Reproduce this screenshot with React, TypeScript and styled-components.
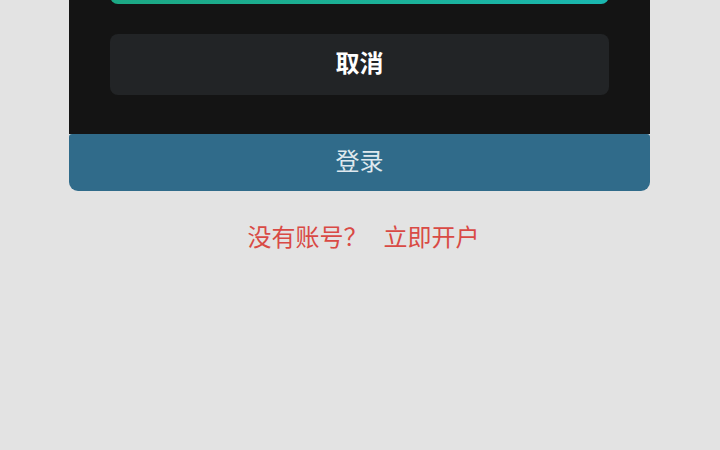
import React from 'react'
import styled, { createGlobalStyle } from 'styled-components'

const GlobalStyle = createGlobalStyle`
  html, body {
    margin: 0;
    padding: 0;
    background: #e3e3e3;
    font-family: "Noto Sans CJK SC", "Noto Sans", sans-serif;
  }
`

const Page = styled.div`
  display: flex;
  flex-direction: column;
  align-items: center;
  height: 450px;
  overflow: hidden;
`

const Card = styled.div`
  width: 581px;
  margin-top: -44px;
  margin-left: -1px;
  display: flex;
  flex-direction: column;
`

const DarkPanel = styled.div`
  background: #141414;
  padding: 0 41px 39px;
  display: flex;
  flex-direction: column;
  gap: 30px;
`

const ActionButton = styled.button<{ $variant: 'primary' | 'ghost' }>`
  border: none;
  border-radius: 8px;
  width: 100%;
  height: ${p => (p.$variant === 'primary' ? '48px' : '61px')};
  padding: 0 0 6px;
  background: ${p =>
    p.$variant === 'primary'
      ? 'linear-gradient(90deg, #1ca884 0%, #1bb29a 60%, #1ab7b0 100%)'
      : '#222426'};
  color: #ffffff;
  font-family: inherit;
  font-size: 24px;
  line-height: 1;
  font-weight: 700;
  display: flex;
  align-items: center;
  justify-content: center;
`

const LoginBar = styled.div`
  height: 57px;
  box-sizing: border-box;
  padding-bottom: 5px;
  background: #306b8a;
  border-radius: 3px 3px 9px 9px;
  color: #dfe8ee;
  font-size: 24px;
  line-height: 1;
  display: flex;
  align-items: center;
  justify-content: center;
`

const SignupRow = styled.div`
  margin-top: 29px;
  margin-left: 7px;
  display: flex;
  gap: 16px;
  color: #d94a45;
  font-size: 24px;
  line-height: 32px;
`

export default function App() {
  return (
    <>
      <GlobalStyle />
      <Page>
        <Card>
          <DarkPanel>
            {/* confirm button, scrolled mostly out of view */}
            <ActionButton $variant='primary' aria-label='确定' />
            <ActionButton $variant='ghost'>取消</ActionButton>
          </DarkPanel>
          <LoginBar>登录</LoginBar>
        </Card>
        <SignupRow>
          <span>没有账号？</span>
          <span>立即开户</span>
        </SignupRow>
      </Page>
    </>
  )
}
